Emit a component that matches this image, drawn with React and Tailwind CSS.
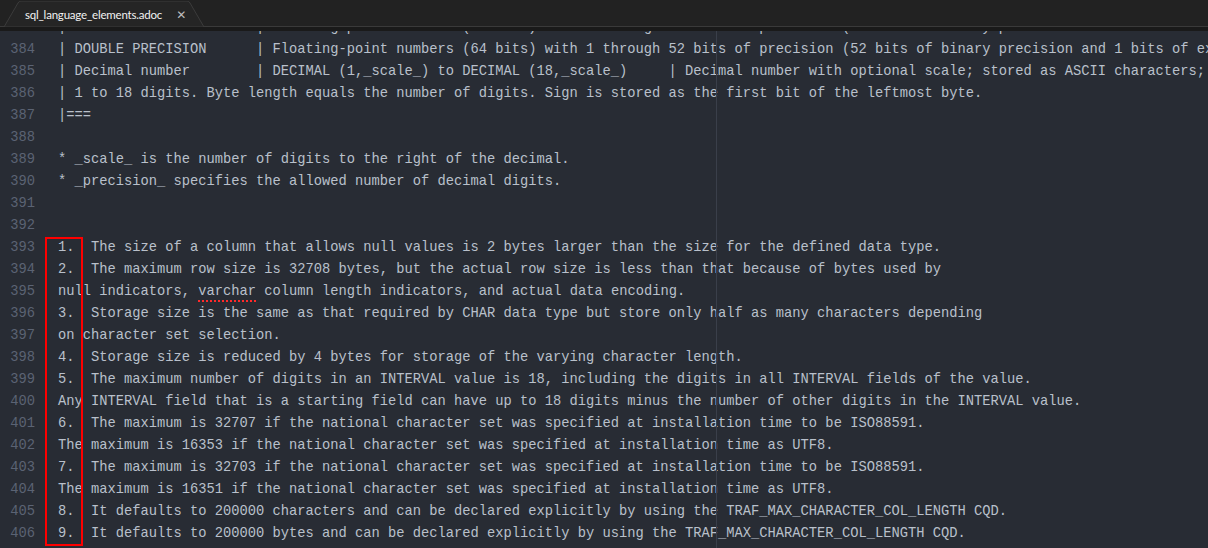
import React from 'react';

const lines = [
  [383, '| REAL                  | Floating-point numbers (32 bits) with 1 through 22 bits of precision (22 bits of binary precision and 1 bits of exponent precision) | Floating'],
  [384, '| DOUBLE PRECISION      | Floating-point numbers (64 bits) with 1 through 52 bits of precision (52 bits of binary precision and 1 bits of exponent precision) | Floating'],
  [385, '| Decimal number        | DECIMAL (1,_scale_) to DECIMAL (18,_scale_)     | Decimal number with optional scale; stored as ASCII characters; signed or unsigned'],
  [386, '| 1 to 18 digits. Byte length equals the number of digits. Sign is stored as the first bit of the leftmost byte.'],
  [387, '|==='],
  [388, ''],
  [389, '* _scale_ is the number of digits to the right of the decimal.'],
  [390, '* _precision_ specifies the allowed number of decimal digits.'],
  [391, ''],
  [392, ''],
  [393, '1.  The size of a column that allows null values is 2 bytes larger than the size for the defined data type.'],
  [394, '2.  The maximum row size is 32708 bytes, but the actual row size is less than that because of bytes used by'],
  [395, 'varchar'],
  [396, '3.  Storage size is the same as that required by CHAR data type but store only half as many characters depending'],
  [397, 'on character set selection.'],
  [398, '4.  Storage size is reduced by 4 bytes for storage of the varying character length.'],
  [399, '5.  The maximum number of digits in an INTERVAL value is 18, including the digits in all INTERVAL fields of the value.'],
  [400, 'Any INTERVAL field that is a starting field can have up to 18 digits minus the number of other digits in the INTERVAL value.'],
  [401, '6.  The maximum is 32707 if the national character set was specified at installation time to be ISO88591.'],
  [402, 'The maximum is 16353 if the national character set was specified at installation time as UTF8.'],
  [403, '7.  The maximum is 32703 if the national character set was specified at installation time to be ISO88591.'],
  [404, 'The maximum is 16351 if the national character set was specified at installation time as UTF8.'],
  [405, '8.  It defaults to 200000 characters and can be declared explicitly by using the TRAF_MAX_CHARACTER_COL_LENGTH CQD.'],
  [406, '9.  It defaults to 200000 bytes and can be declared explicitly by using the TRAF_MAX_CHARACTER_COL_LENGTH CQD.'],
];

function LineText({ num, text }) {
  // line 395 carries the spell-check squiggle
  if (num === 395) {
    return (
      <span>
        null indicators,{' '}
        <span className="underline decoration-dotted decoration-[#ff2a2a] decoration-2 underline-offset-[5px]">
          varchar
        </span>{' '}
        column length indicators, and actual data encoding.
      </span>
    );
  }
  return <span>{text}</span>;
}

function TabBar() {
  return (
    <div className="h-[31px] shrink-0 bg-[#1a1a1a] flex flex-col">
      <div className="h-[27px] bg-[#222222] border-b border-[#3a3a3a] flex items-end">
        <div className="relative ml-[4px] w-[200px] h-[26px] -mb-px flex items-center">
          <svg className="absolute inset-0" width="200" height="26" viewBox="0 0 200 26">
            <path d="M0 26 L14 2 Q15 0 17 0 L183 0 Q185 0 186 2 L200 26 Z" fill="#252525" stroke="#3c3c3c" strokeWidth="1" />
          </svg>
          <span
            className="relative ml-[21px] mt-[2px] text-[11.5px] tracking-[-0.2px] text-[#f2f2f2] leading-none"
            style={{ fontFamily: 'Lato, "Noto Sans", sans-serif' }}
          >
            sql_language_elements.adoc
          </span>
          <span className="relative ml-[14px] mt-[2px] text-[12px] text-[#bdbdbd] font-bold leading-none" style={{ fontFamily: '"DejaVu Sans", sans-serif' }}>
            ✕
          </span>
        </div>
      </div>
    </div>
  );
}

export default function App() {
  return (
    <div className="w-[1208px] h-[548px] overflow-hidden bg-[#282c34] flex flex-col">
      <TabBar />
      <div className="relative flex-1 overflow-hidden">
        <div
          className="-mt-[14px] text-[13.75px] leading-[22px] whitespace-pre"
          style={{ fontFamily: '"Liberation Mono", "DejaVu Sans Mono", monospace' }}
        >
          {lines.map(([num, text]) => (
            <div key={num} className="flex">
              <span className="w-[35px] text-right text-[#5b6373] shrink-0">{num}</span>
              <span className="pl-[23px] text-[#b9c0cb]">
                <LineText num={num} text={text} />
              </span>
            </div>
          ))}
        </div>
        <div className="absolute top-0 bottom-0 left-[716px] w-px bg-[#3a3f4a]" />
        <div className="absolute left-[45px] top-[206px] w-[38px] h-[309px] border-2 border-[#ff0000]" />
      </div>
    </div>
  );
}
